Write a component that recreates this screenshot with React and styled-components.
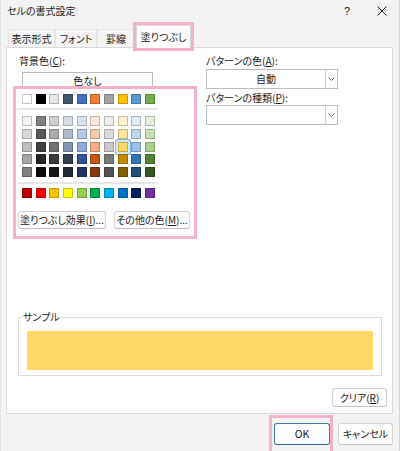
import React from "react";
import styled, { createGlobalStyle } from "styled-components";

const PINK = "#f4b1c9";

const GlobalStyle = createGlobalStyle`
  * { box-sizing: border-box; }
  html, body { margin: 0; padding: 0; background: #f3f3f3; }
  body {
    font-family: "Noto Sans CJK JP", "Noto Sans", sans-serif;
    font-size: 10px;
    color: #1b1b1b;
    font-feature-settings: "palt";
  }
  button { font-family: inherit; font-feature-settings: "palt"; color: inherit; }
`;

const Window = styled.div`
  width: 400px;
  height: 451px;
  overflow: hidden;
  background: #f3f3f3;
  border-left: 1px solid #e4e4e4;
  border-right: 1px solid #d4d4d4;
  display: flex;
  flex-direction: column;
`;

const TitleBar = styled.div`
  height: 22px;
  display: flex;
  align-items: center;
  padding-left: 6px;
`;

const Title = styled.span`
  flex: 1;
  font-size: 10px;
  line-height: 14px;
`;

const TitleButton = styled.span`
  width: ${(p) => p.$w}px;
  height: 22px;
  display: flex;
  align-items: center;
  justify-content: center;
  font-size: 11px;
  font-family: "Liberation Sans", sans-serif;
`;

const TabStrip = styled.div`
  height: 26px;
  display: flex;
  align-items: flex-end;
  padding-left: 7px;
  margin-bottom: -1px;
  position: relative;
  z-index: 2;
`;

const Tab = styled.div`
  width: ${(p) => p.$w}px;
  height: ${(p) => (p.$active ? 23 : 18)}px;
  margin-bottom: ${(p) => (p.$active ? 0 : 1)}px;
  margin-left: ${(p) => (p.$active ? 1 : 0)}px;
  display: flex;
  align-items: center;
  justify-content: center;
  padding-top: ${(p) => (p.$active ? 0 : 1)}px;
  background: ${(p) => (p.$active ? "#fff" : "#f5f5f5")};
  border: 1px solid ${(p) => (p.$active ? "#d9d9d9" : "#e6e6e6")};
  border-bottom: none;
  outline: ${(p) => (p.$active ? `3px solid ${PINK}` : "none")};
  line-height: 14px;
`;

const Panel = styled.div`
  flex: 1;
  margin: 0 6px 0 5px;
  background: #fff;
  border: 1px solid #d9d9d9;
  display: flex;
  flex-direction: column;
  padding: 6px 5px 6px 6px;
`;

const TopRow = styled.div`
  display: flex;
  gap: 9px;
`;

const LeftCol = styled.div`
  width: 184px;
  display: flex;
  flex-direction: column;
`;

const RightCol = styled.div`
  width: 132px;
  display: flex;
  flex-direction: column;
`;

const Label = styled.div`
  height: 14px;
  line-height: 14px;
  margin-left: ${(p) => p.$indent || 0}px;
  margin-top: ${(p) => p.$top || 0}px;
`;

const NoColorButton = styled.div`
  width: 131px;
  height: 15px;
  margin: 4px 0 0 9px;
  border: 1px solid #bcbcbc;
  border-bottom: none;
  background: #fdfdfd;
  text-align: center;
  line-height: 15px;
  overflow: hidden;
`;

const PaletteFrame = styled.div`
  position: relative;
  width: 184px;
  margin-top: -1px;
  border: 3px solid ${PINK};
  padding: 5px 0 7px 0;
`;

const SwatchGrid = styled.div`
  display: grid;
  grid-template-columns: repeat(10, 10px);
  column-gap: 3.67px;
  row-gap: 2.8px;
  margin-left: 6px;
`;

const Swatch = styled.div`
  width: 10px;
  height: 10px;
  background: ${(p) => p.$color};
  border: 1px solid rgba(0, 0, 0, 0.22);
  border-radius: 0.5px;
  box-shadow: ${(p) =>
    p.$selected ? "0 0 0 2px #d3e8f8, 0 0 0 3px #84bbe8" : "none"};
`;

const Separator = styled.div`
  width: 141px;
  height: 2px;
  background: #e6e6e6;
  margin: ${(p) => p.$m};
`;

const FrameButtons = styled.div`
  display: flex;
  gap: 8px;
  margin: 13px 0 0 2px;
`;

const Button = styled.button`
  width: ${(p) => p.$w}px;
  height: ${(p) => p.$h || 18}px;
  padding: 0;
  background: #fdfdfd;
  border: 1px solid ${(p) => (p.$primary ? "#3f78b3" : "#d2d2d2")};
  border-bottom-color: ${(p) => (p.$primary ? "#2d639c" : "#c0c0c0")};
  border-radius: 3px;
  font-size: ${(p) => (p.$primary ? 10.5 : 10)}px;
  line-height: 14px;
  white-space: nowrap;
`;

const Select = styled.div`
  height: 20px;
  margin-top: ${(p) => p.$top || 0}px;
  display: flex;
  border: 1px solid #bdbdbd;
  background: #fff;
`;

const SelectValue = styled.div`
  flex: 1;
  text-align: center;
  line-height: 18px;
`;

const SelectArrow = styled.div`
  width: 12px;
  border-left: 1px solid #d2d2d2;
  display: flex;
  align-items: center;
  justify-content: center;
`;

const SampleBox = styled.fieldset`
  margin: auto 5px 0 5px;
  border: 1px solid #dcdcdc;
  padding: 8px 8px 5px 8px;
  min-width: 0;
`;

const Legend = styled.legend`
  padding: 0 1px;
  margin-left: -5px;
  line-height: 12px;
  font-size: 10px;
`;

const SampleFill = styled.div`
  height: 39px;
  background: ${(p) => p.$color};
`;

const ClearRow = styled.div`
  display: flex;
  justify-content: flex-end;
  margin-top: 12px;
`;

const Footer = styled.div`
  height: 37px;
  flex-shrink: 0;
  display: flex;
  justify-content: flex-end;
  align-items: flex-start;
  gap: 5px;
  padding: 1px 6px 0 0;
`;

const Highlight = styled.div`
  height: 42px;
  border: 3px solid ${PINK};
  padding: 5px 0 0 2px;
  width: 64px;
`;

const CancelWrap = styled.div`
  margin-top: 8px;
`;

const theme = [
  ["#ffffff", "#000000", "#e7e6e6", "#44546a", "#4472c4", "#ed7d31", "#a5a5a5", "#ffc000", "#5b9bd5", "#70ad47"],
];

const tints = [
  ["#f2f2f2", "#7f7f7f", "#d0cece", "#d6dce4", "#d9e1f2", "#fce4d6", "#ededed", "#fff2cc", "#ddebf7", "#e2efda"],
  ["#d9d9d9", "#595959", "#aeaaaa", "#acb9ca", "#b4c6e7", "#f8cbad", "#dbdbdb", "#ffe699", "#bdd7ee", "#c6e0b4"],
  ["#bfbfbf", "#404040", "#757171", "#8497b0", "#8ea9db", "#f4b084", "#c9c9c9", "#ffd966", "#9bc2e6", "#a9d08e"],
  ["#a6a6a6", "#262626", "#3a3838", "#333f4f", "#305496", "#c65911", "#7b7b7b", "#bf8f00", "#2f75b5", "#548235"],
  ["#808080", "#0d0d0d", "#161616", "#222b35", "#203764", "#833c0c", "#525252", "#806000", "#1f4e78", "#375623"],
];

const standard = [
  ["#c00000", "#ff0000", "#ffc000", "#ffff00", "#92d050", "#00b050", "#00b0f0", "#0070c0", "#002060", "#7030a0"],
];

const SELECTED = "#ffd966";

const Chevron = () => (
  <svg width="7" height="4" viewBox="0 0 7 4">
    <path d="M0.5 0.5 L3.5 3.5 L6.5 0.5" fill="none" stroke="#5a5a5a" strokeWidth="0.9" />
  </svg>
);

const CloseIcon = () => (
  <svg width="10" height="10" viewBox="0 0 10 10">
    <path d="M0.5 0.5 L9.5 9.5 M9.5 0.5 L0.5 9.5" stroke="#1b1b1b" strokeWidth="1" />
  </svg>
);

const Grid = ({ rows }) => (
  <SwatchGrid>
    {rows.flat().map((c, i) => (
      <Swatch key={i} $color={c} $selected={rows === tints && c === SELECTED} />
    ))}
  </SwatchGrid>
);

const tabs = [
  { label: "表示形式", w: 47 },
  { label: "フォント", w: 42 },
  { label: "罫線", w: 38 },
  { label: "塗りつぶし", w: 55, active: true },
];

export default function App() {
  return (
    <>
      <GlobalStyle />
      <Window>
        <TitleBar>
          <Title>セルの書式設定</Title>
          <TitleButton $w={36}>?</TitleButton>
          <TitleButton $w={34}>
            <CloseIcon />
          </TitleButton>
        </TitleBar>

        <TabStrip>
          {tabs.map((t) => (
            <Tab key={t.label} $w={t.w} $active={t.active}>
              {t.label}
            </Tab>
          ))}
        </TabStrip>

        <Panel>
          <TopRow>
            <LeftCol>
              <Label $indent={6}>
                背景色(<u>C</u>):
              </Label>
              <NoColorButton>色なし</NoColorButton>
              <PaletteFrame>
                <Grid rows={theme} />
                <Separator $m="4px 0 6px 1px" />
                <Grid rows={tints} />
                <Separator $m="5px 0 4px 1px" />
                <Grid rows={standard} />
                <FrameButtons>
                  <Button $w={88}>
                    塗りつぶし効果(<u>I</u>)...
                  </Button>
                  <Button $w={76}>
                    その他の色(<u>M</u>)...
                  </Button>
                </FrameButtons>
              </PaletteFrame>
            </LeftCol>

            <RightCol>
              <Label>
                パターンの色(<u>A</u>):
              </Label>
              <Select $top={1}>
                <SelectValue>自動</SelectValue>
                <SelectArrow>
                  <Chevron />
                </SelectArrow>
              </Select>
              <Label $top={2}>
                パターンの種類(<u>P</u>):
              </Label>
              <Select>
                <SelectValue />
                <SelectArrow>
                  <Chevron />
                </SelectArrow>
              </Select>
            </RightCol>
          </TopRow>

          <SampleBox>
            <Legend>サンプル</Legend>
            <SampleFill $color={SELECTED} />
          </SampleBox>

          <ClearRow>
            <Button $w={55} $h={19}>
              クリア(<u>R</u>)
            </Button>
          </ClearRow>
        </Panel>

        <Footer>
          <Highlight>
            <Button $w={56} $h={22} $primary>
              OK
            </Button>
          </Highlight>
          <CancelWrap>
            <Button $w={55} $h={22}>
              キャンセル
            </Button>
          </CancelWrap>
        </Footer>
      </Window>
    </>
  );
}
